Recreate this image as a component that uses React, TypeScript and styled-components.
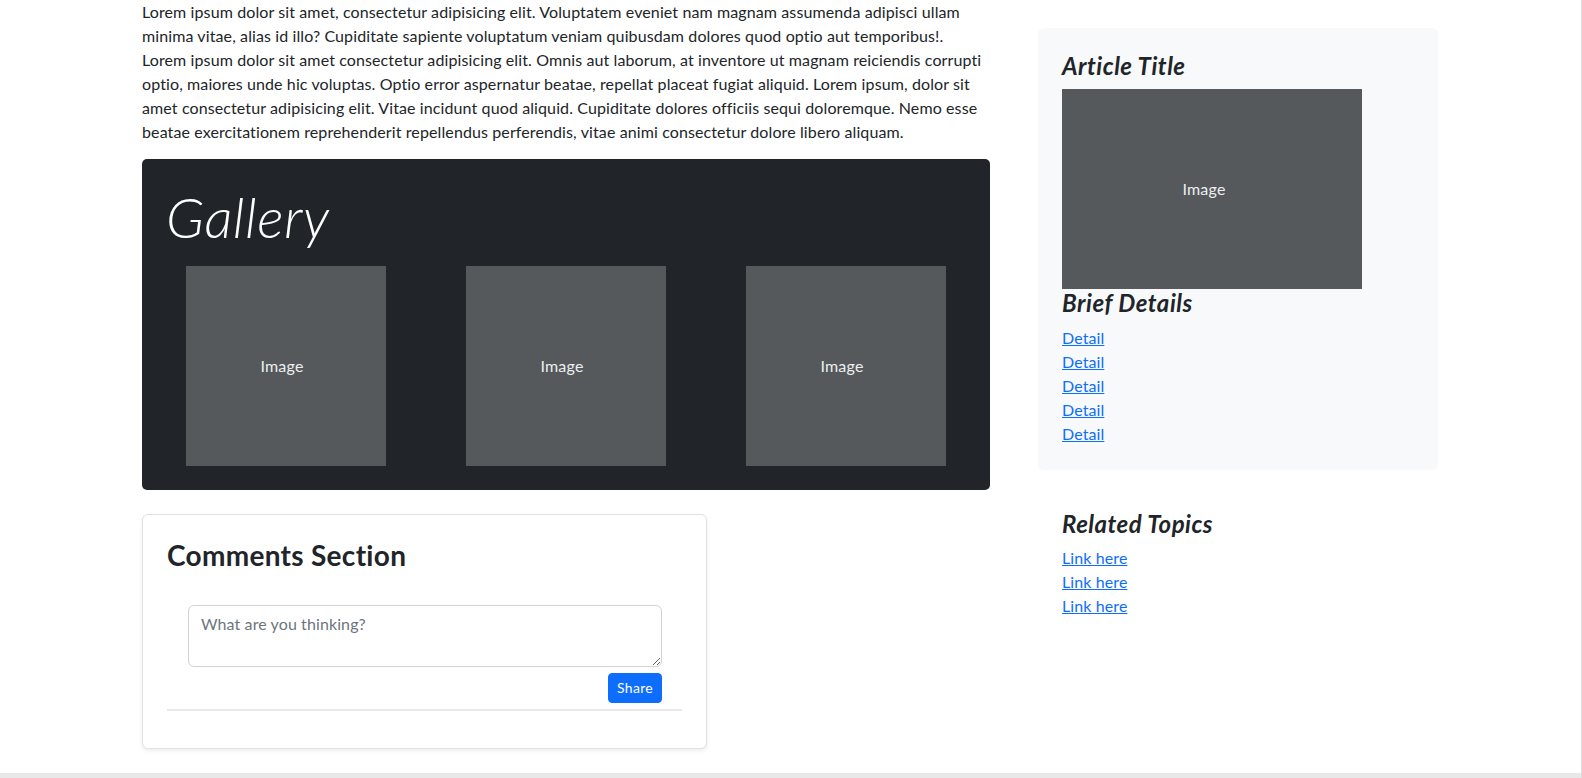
import React from "react";
import styled, { createGlobalStyle } from "styled-components";

const GlobalStyle = createGlobalStyle`
  * { box-sizing: border-box; }
  html, body { margin: 0; padding: 0; background: #fff; }
  body {
    font-family: "Lato", "Liberation Sans", sans-serif;
    font-size: 16px;
    line-height: 1.5;
    color: #212529;
    overflow: hidden;
  }
`;

const Shell = styled.div`
  width: 1582px;
  height: 778px;
  border-right: 1px solid #dcdcdc;
  display: flex;
  flex-direction: column;
`;

const Layout = styled.div`
  display: flex;
  align-items: flex-start;
  gap: 48px;
  padding-left: 142px;
`;

const Main = styled.main`
  width: 848px;
  display: flex;
  flex-direction: column;
`;

const Intro = styled.p`
  margin: 0 0 15px;
  letter-spacing: 0.11px;
`;

const Line = styled.span`
  display: block;
  white-space: nowrap;
`;

const Gallery = styled.section`
  background: #212529;
  border-radius: 5px;
  padding: 24px 24px 24px;
`;

const GalleryTitle = styled.h1`
  margin: 0 0 16px;
  font-family: "Lato", sans-serif;
  font-size: 56px;
  font-weight: 300;
  font-style: italic;
  line-height: 1.2;
  color: #fff;
  letter-spacing: 0.5px;
`;

const ImageRow = styled.div`
  display: flex;
  gap: 80px;
  padding-left: 20px;
`;

const Placeholder = styled.div<{ $w: number; $h: number; $shift: number }>`
  width: ${(p) => p.$w}px;
  height: ${(p) => p.$h}px;
  flex: none;
  background: #55595c;
  color: #eceeef;
  display: flex;
  align-items: center;
  justify-content: center;
  font-size: 16px;
  letter-spacing: 0.2px;
  & > span {
    transform: translateX(${(p) => p.$shift}px);
  }
`;

const Card = styled.section`
  margin-top: 24px;
  width: 565px;
  border: 1px solid #dee2e6;
  border-radius: 6px;
  box-shadow: 0 2px 4px rgba(0, 0, 0, 0.075);
  padding: 24px 24px 37px;
  background: #fff;
`;

const CardTitle = styled.h3`
  margin: 0;
  font-size: 28px;
  font-weight: 700;
  line-height: 1.2;
  letter-spacing: 0.3px;
  color: #212529;
`;

const CommentForm = styled.form`
  margin: 32px 20px 0 21px;
  display: flex;
  flex-direction: column;
  align-items: flex-end;
`;

const TextArea = styled.textarea`
  width: 100%;
  height: 62px;
  border: 1px solid #ced4da;
  border-radius: 6px;
  padding: 6px 12px;
  font-family: "Lato", sans-serif;
  font-size: 16px;
  line-height: 1.5;
  color: #212529;
  display: block;
  &::placeholder {
    color: #6c757d;
    letter-spacing: 0.1px;
  }
`;

const ShareButton = styled.button`
  margin-top: 6px;
  background: #0d6efd;
  color: #fff;
  border: 1px solid #0d6efd;
  border-radius: 4px;
  height: 30px;
  padding: 0 8px;
  font-family: "Lato", sans-serif;
  font-size: 14px;
  letter-spacing: 0.3px;
  cursor: pointer;
`;

const Divider = styled.hr`
  margin: 6px 0 0;
  border: 0;
  height: 2px;
  background: #e9e9e9;
`;

const Sidebar = styled.aside`
  width: 400px;
  margin-top: 28px;
  display: flex;
  flex-direction: column;
  gap: 16px;
`;

const SideBox = styled.div<{ $tinted?: boolean }>`
  background: ${(p) => (p.$tinted ? "#f8f9fa" : "transparent")};
  border-radius: 6px;
  padding: 24px;
`;

const SideTitle = styled.h4<{ $gap?: boolean }>`
  margin: 0 0 ${(p) => (p.$gap ? 8 : 0)}px;
  font-size: 24px;
  font-weight: 700;
  font-style: italic;
  line-height: 1.2;
  letter-spacing: 0.5px;
  color: #212529;
`;

const LinkList = styled.ul`
  list-style: none;
  margin: 8px 0 0;
  padding: 0;
`;

const LinkItem = styled.li`
  line-height: 24px;
  & a {
    color: #0d6efd;
    text-decoration: underline;
    letter-spacing: 0.1px;
  }
`;

const Footer = styled.footer`
  margin-top: 24px;
  height: 5px;
  background: #e8e8e8;
`;

const introLines = [
  "Lorem ipsum dolor sit amet, consectetur adipisicing elit. Voluptatem eveniet nam magnam assumenda adipisci ullam",
  "minima vitae, alias id illo? Cupiditate sapiente voluptatum veniam quibusdam dolores quod optio aut temporibus!.",
  "Lorem ipsum dolor sit amet consectetur adipisicing elit. Omnis aut laborum, at inventore ut magnam reiciendis corrupti",
  "optio, maiores unde hic voluptas. Optio error aspernatur beatae, repellat placeat fugiat aliquid. Lorem ipsum, dolor sit",
  "amet consectetur adipisicing elit. Vitae incidunt quod aliquid. Cupiditate dolores officiis sequi doloremque. Nemo esse",
  "beatae exercitationem reprehenderit repellendus perferendis, vitae animi consectetur dolore libero aliquam.",
];

export default function App() {
  return (
    <>
      <GlobalStyle />
      <Shell>
        <Layout>
          <Main>
            <Intro>
              {introLines.map((l, i) => (
                <Line key={i}>{l}</Line>
              ))}
            </Intro>
            <Gallery>
              <GalleryTitle>Gallery</GalleryTitle>
              <ImageRow>
                {[0, 1, 2].map((i) => (
                  <Placeholder key={i} $w={200} $h={200} $shift={-4}>
                    <span>Image</span>
                  </Placeholder>
                ))}
              </ImageRow>
            </Gallery>
            <Card>
              <CardTitle>Comments Section</CardTitle>
              <CommentForm onSubmit={(e) => e.preventDefault()}>
                <TextArea placeholder="What are you thinking?" />
                <ShareButton type="submit">Share</ShareButton>
              </CommentForm>
              <Divider />
            </Card>
          </Main>
          <Sidebar>
            <SideBox $tinted>
              <SideTitle $gap>Article Title</SideTitle>
              <Placeholder $w={300} $h={200} $shift={-8}>
                <span>Image</span>
              </Placeholder>
              <SideTitle>Brief Details</SideTitle>
              <LinkList>
                {[0, 1, 2, 3, 4].map((i) => (
                  <LinkItem key={i}>
                    <a href="#">Detail</a>
                  </LinkItem>
                ))}
              </LinkList>
            </SideBox>
            <SideBox>
              <SideTitle>Related Topics</SideTitle>
              <LinkList>
                {[0, 1, 2].map((i) => (
                  <LinkItem key={i}>
                    <a href="#">Link here</a>
                  </LinkItem>
                ))}
              </LinkList>
            </SideBox>
          </Sidebar>
        </Layout>
        <Footer />
      </Shell>
    </>
  );
}
